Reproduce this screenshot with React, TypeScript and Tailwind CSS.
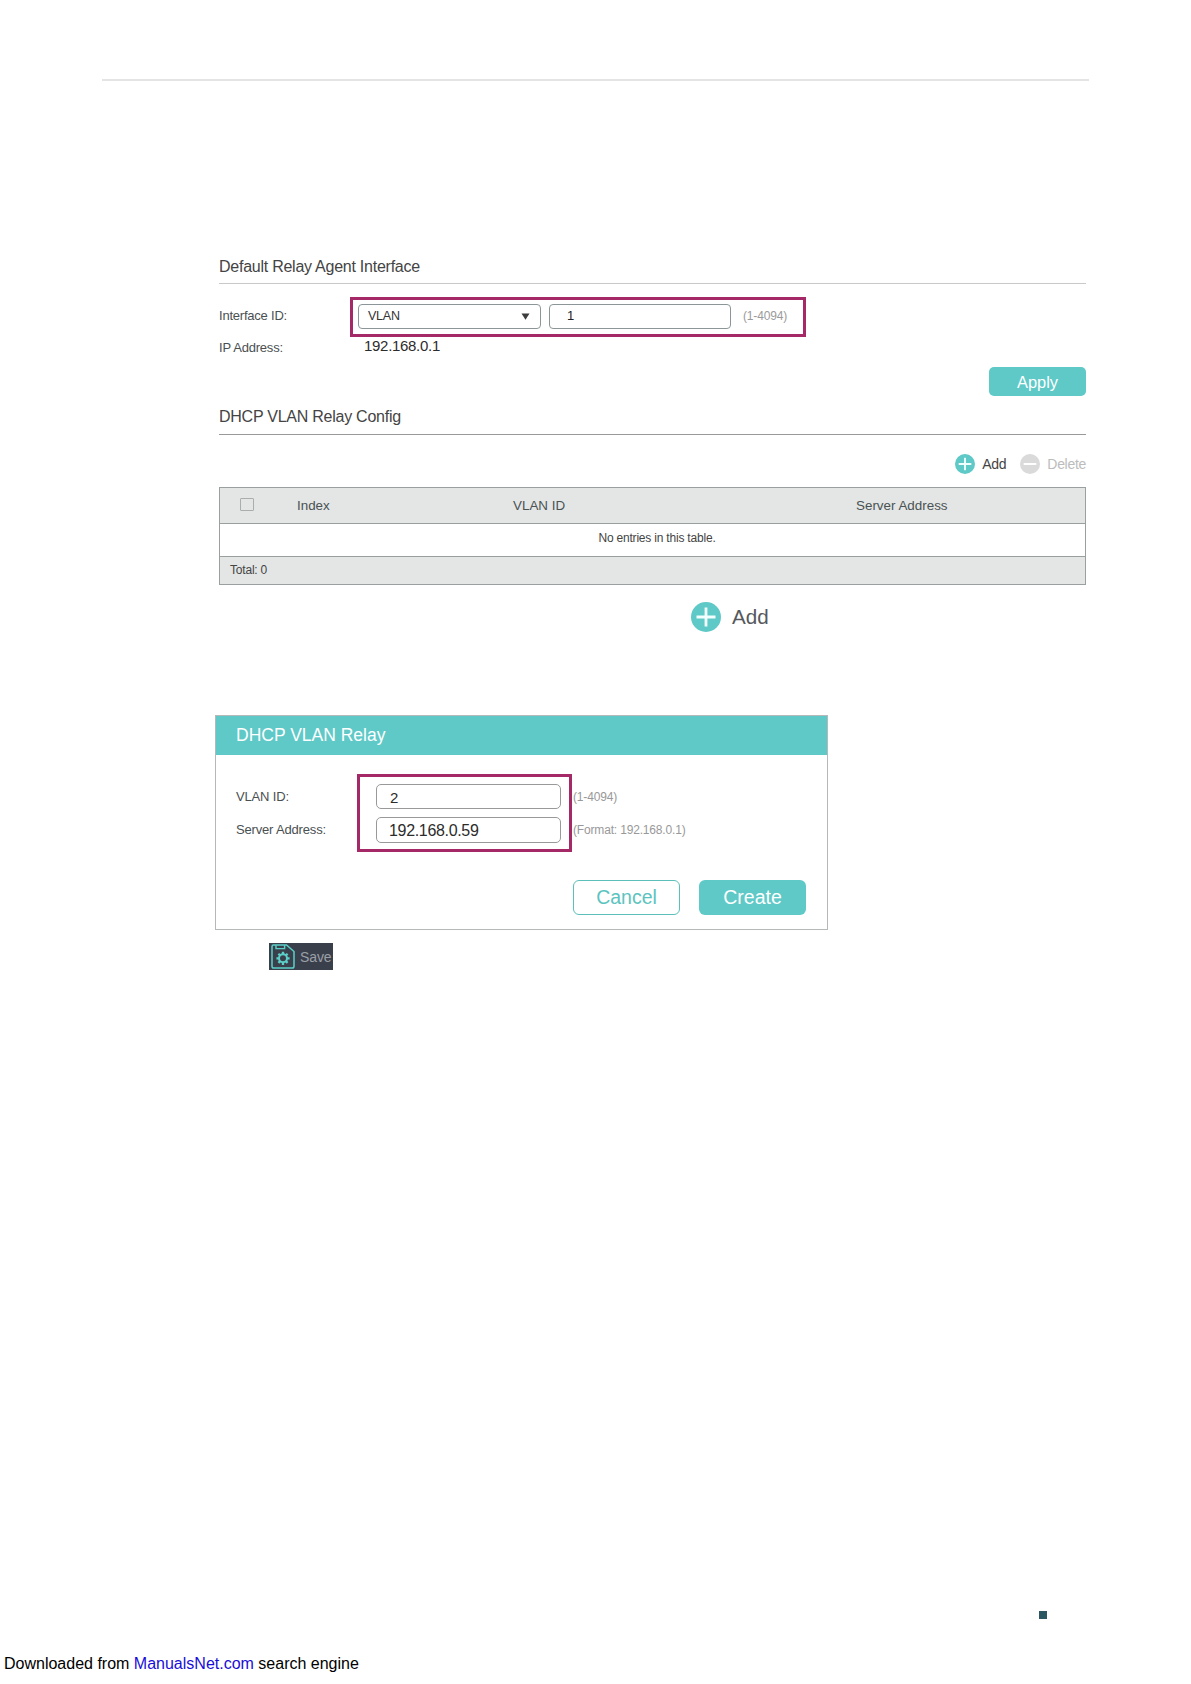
import React from 'react';

interface IconProps {
  className?: string;
}

const columns = [
  { title: 'Index', className: 'w-[216px]' },
  { title: 'VLAN ID', className: 'w-[343px]' },
  { title: 'Server Address', className: '' },
];

function PlusIcon({ className }: IconProps) {
  return (
    <svg viewBox="0 0 30 30" className={className}>
      <circle cx="15" cy="15" r="15" fill="#5ec9c6" />
      <path d="M15 5.5v19M5.5 15h19" stroke="#f2fffe" strokeWidth="2.8" fill="none" />
    </svg>
  );
}

function MinusIcon({ className }: IconProps) {
  return (
    <svg viewBox="0 0 30 30" className={className}>
      <circle cx="15" cy="15" r="15" fill="#dadada" />
      <path d="M5.5 15h19" stroke="#fff" strokeWidth="3" fill="none" />
    </svg>
  );
}

function SaveIcon({ className }: IconProps) {
  return (
    <svg viewBox="0 0 24 25" className={className} fill="none" stroke="#5ccfc8">
      <path d="M2.5 1H15.5L23 7.5V22.2Q23 24 21.2 24H2.8Q1 24 1 22.2V2.5Q1 1 2.5 1Z" strokeWidth="1.5" />
      <path d="M5 1.2V4.6H13.6V1.2" strokeWidth="1.4" />
      <circle cx="12" cy="14.3" r="4" strokeWidth="2" />
      <path
        d="M12 10.4V7.7M12 18.2V20.9M8.1 14.3H5.4M15.9 14.3H18.6M9.2 11.5L7.4 9.7M14.8 17.1L16.6 18.9M14.8 11.5L16.6 9.7M9.2 17.1L7.4 18.9"
        strokeWidth="2.3"
      />
    </svg>
  );
}

function SectionTitle({ children, className }: { children: React.ReactNode; className: string }) {
  return (
    <h2 className={`border-b text-[16px] leading-6 tracking-[-0.25px] text-[#444] ${className}`}>
      {children}
    </h2>
  );
}

function RelayDialog() {
  return (
    <div className="mt-[83px] ml-[215px] h-[215px] w-[613px] border border-[#b5b9b9]">
      <div className="flex h-[39px] items-center bg-[#5ec9c7] pb-0.5 pl-5 text-[17.5px] leading-6 text-white">
        DHCP VLAN Relay
      </div>
      <div className="mt-[19px] flex pl-5 text-[13px] tracking-[-0.17px] text-[#4a5052]">
        <div className="flex w-[121px] flex-col gap-[9px] pt-[11px] leading-6">
          <span>VLAN ID:</span>
          <span>Server Address:</span>
        </div>
        <div className="flex h-[78px] w-[215px] flex-col gap-2 border-[3px] border-[#a52967] py-[7px] pr-2 pl-4 tracking-normal text-[#2c2c2c]">
          <div className="flex h-[25px] items-center rounded-[5px] border border-[#999] pt-0.5 pl-[13px] text-[15px] leading-6">
            2
          </div>
          <div className="flex h-[26px] items-center rounded-[5px] border border-[#999] pt-px pl-3 text-[16px] leading-6 tracking-[-0.33px]">
            192.168.0.59
          </div>
        </div>
        <div className="flex flex-col gap-[9px] pt-[11px] pl-px text-[12px] leading-6 text-[#999]">
          <span>(1-4094)</span>
          <span>(Format: 192.168.0.1)</span>
        </div>
      </div>
      <div className="mt-7 flex justify-end gap-[19px] pr-[21px] text-[19.5px] leading-6">
        <button className="h-[35px] w-[107px] rounded-md border border-[#5cbfba] pb-0.5 text-[#5cc4c0]">
          Cancel
        </button>
        <button className="h-[35px] w-[107px] rounded-md bg-[#5ec9c7] pb-0.5 text-white">
          Create
        </button>
      </div>
    </div>
  );
}

export default function App() {
  return (
    <div className="flex h-[1684px] w-[1191px] flex-col overflow-hidden bg-white font-['Liberation_Sans',Arial,sans-serif]">
      <div className="mt-[79px] ml-[102px] h-0.5 w-[987px] shrink-0 bg-[#e4e4e4]" />

      {/* Default relay agent */}
      <div className="mt-[174px] ml-[219px] w-[867px]">
        <SectionTitle className="h-[29px] border-[#c9c9c9]">Default Relay Agent Interface</SectionTitle>
        <div className="mt-[13px] flex text-[13px] leading-6 tracking-[-0.22px] text-[#4a5052]">
          <span className="w-[131px] pt-[7px]">Interface ID:</span>
          <div className="flex h-10 w-[456px] border-[3px] border-[#a52967] pt-1 pl-[5px]">
            <div className="flex h-[25px] w-[183px] items-center justify-between rounded border border-[#8c9698] pr-2.5 pb-0.5 pl-[9px] text-[12.5px] text-[#333]">
              VLAN
              <svg viewBox="0 0 9 7" className="mt-0.5 h-[7px] w-[9px]">
                <path d="M0.5 0.5h8L4.5 6.8z" fill="#3d3d3d" />
              </svg>
            </div>
            <div className="ml-2 flex h-[25px] w-[182px] items-center rounded border border-[#8c9698] pb-0.5 pl-[17px] text-[13px] text-[#222]">
              1
            </div>
            <span className="ml-3 text-[12px] tracking-[-0.15px] text-[#9b9b9b]">(1-4094)</span>
          </div>
        </div>
        <div className="flex h-5 items-start text-[13px] leading-[22px] tracking-[-0.22px] text-[#4a5052]">
          <span className="w-[144px]">IP Address:</span>
          <span className="pl-px text-[15px] leading-[17px] tracking-[-0.3px] text-[#2c2c2c]">192.168.0.1</span>
        </div>
        <div className="mt-2.5 flex justify-end">
          <button className="h-[29px] w-[97px] rounded-[5px] bg-[#5ec9c7] text-[16.4px] leading-6 text-white">
            Apply
          </button>
        </div>
      </div>

      {/* VLAN relay table */}
      <div className="mt-[9px] ml-[219px] w-[867px]">
        <SectionTitle className="h-[30px] border-[#999]">DHCP VLAN Relay Config</SectionTitle>
        <div className="mt-[19px] flex h-5 items-center justify-end text-[14px] leading-5 tracking-[-0.3px]">
          <PlusIcon className="mr-[7px] size-5" />
          <span className="text-[#444]">Add</span>
          <MinusIcon className="mr-[7px] ml-3.5 size-5" />
          <span className="text-[#bcbcbc]">Delete</span>
        </div>
        <div className="mt-[13px] border border-[#9a9f9f] text-[12px] text-[#444]">
          <div className="flex h-9 items-center border-b border-[#9a9f9f] bg-[#e3e6e5] pl-5 text-[13.4px] text-[#4a5254]">
            <span className="mr-[43px] mb-0.5 h-[13px] w-3.5 rounded-[1px] border border-[#a9adad]" />
            {columns.map((column) => (
              <span key={column.title} className={`pt-px ${column.className}`}>
                {column.title}
              </span>
            ))}
          </div>
          <div className="flex h-[33px] items-center justify-center border-b border-[#9a9f9f] pb-[5px] pl-[9px] tracking-[-0.2px]">
            No entries in this table.
          </div>
          <div className="flex h-[27px] items-center bg-[#e3e6e5] pb-0.5 pl-2.5 tracking-[-0.2px]">
            Total: 0
          </div>
        </div>
      </div>

      <div className="mt-[17px] ml-[691px] flex h-[30px] items-center text-[20.6px] leading-[30px] text-[#55585c]">
        <PlusIcon className="mr-[11px] size-[30px]" />
        Add
      </div>

      <RelayDialog />

      <div className="mt-[13px] ml-[269px] flex h-[27px] w-16 items-center bg-[#39404c] pl-0.5 text-[14px] leading-6 tracking-[-0.1px] text-[#9b9fa6]">
        <SaveIcon className="mr-[5px] h-[25px] w-6 shrink-0" />
        Save
      </div>

      <div className="mt-[641px] ml-[1039px] size-2 shrink-0 bg-[#2b5763]" />

      <p className="mt-[33px] pl-1 text-[16px] leading-6 text-black">
        Downloaded from <a className="text-[#1a0dd8]">ManualsNet.com</a> search engine
      </p>
    </div>
  );
}
